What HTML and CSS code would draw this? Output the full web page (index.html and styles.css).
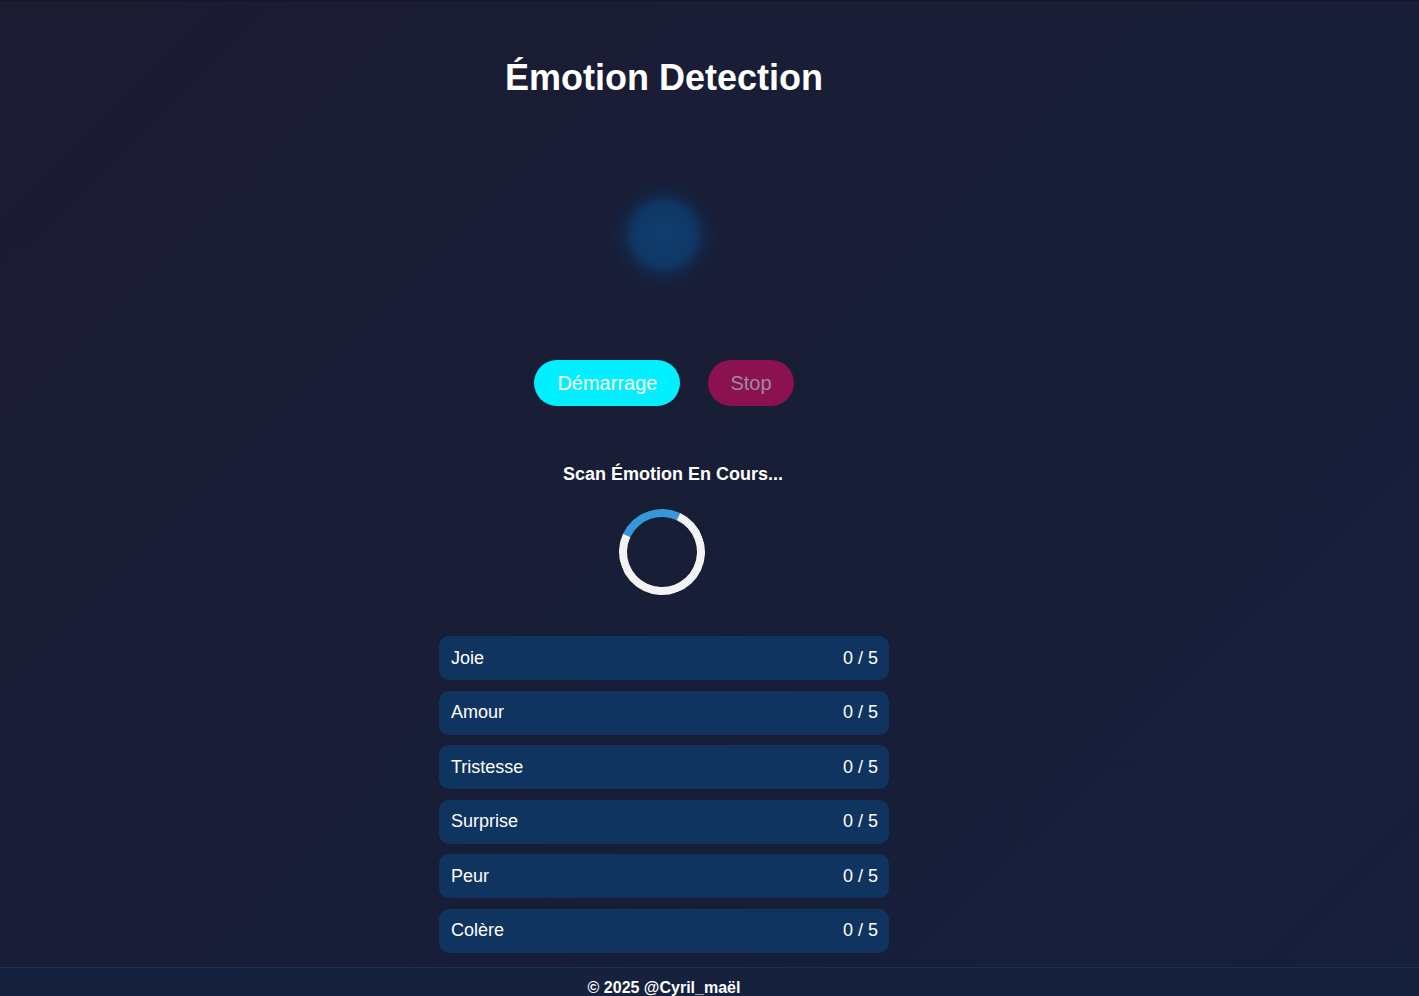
FILE: index.html
```html
<!DOCTYPE html>
<html lang="fr">
<head>
<meta charset="utf-8">
<title>Émotion Detection</title>
<link rel="stylesheet" href="styles.css">
</head>
<body>
<div class="page">
  <main class="main">
    <h1 class="title">Émotion Detection</h1>
    <div class="glow"></div>
    <div class="actions">
      <button class="btn btn-start">Démarrage</button>
      <button class="btn btn-stop" disabled>Stop</button>
    </div>
    <p class="status">Scan Émotion En Cours...</p>
    <div class="spinner"></div>
    <ul class="emotions">
      <li class="emotion"><span>Joie</span><span>0 / 5</span></li>
      <li class="emotion"><span>Amour</span><span>0 / 5</span></li>
      <li class="emotion"><span>Tristesse</span><span>0 / 5</span></li>
      <li class="emotion"><span>Surprise</span><span>0 / 5</span></li>
      <li class="emotion"><span>Peur</span><span>0 / 5</span></li>
      <li class="emotion"><span>Colère</span><span>0 / 5</span></li>
    </ul>
  </main>
  <footer class="footer">
    <p class="footer-text">© 2025 @Cyril_maël</p>
  </footer>
</div>
</body>
</html>
```
FILE: styles.css
```css
html, body {
  margin: 0;
  padding: 0;
}
body {
  background: linear-gradient(135deg, #1b1b31 0%, #181e38 60%, #161f3b 100%);
  min-height: 100vh;
  font-family: "Liberation Sans", Arial, sans-serif;
  color: #ffffff;
  border-top: 1px solid #14162a;
}
.page {
  display: flex;
  flex-direction: column;
}
.main {
  width: 1328px;
  display: flex;
  flex-direction: column;
  align-items: center;
}
.title {
  margin: 56px 0 0;
  font-size: 36px;
  line-height: 42px;
  font-weight: 700;
}
.glow {
  margin-top: 100px;
  width: 72px;
  height: 72px;
  border-radius: 50%;
  background: radial-gradient(circle, #103e70 0%, #0f3866 55%, #0f3460 100%);
  box-shadow: 0 0 20px 9px rgba(15, 52, 96, 0.6);
  filter: blur(3px);
}
.actions {
  margin-top: 89px;
  display: flex;
  gap: 28px;
}
.btn {
  height: 46px;
  padding: 0 23px;
  border: none;
  border-radius: 23px;
  font-family: "Liberation Sans", Arial, sans-serif;
  font-size: 20px;
}
.btn-start {
  background: #00f0ff;
  color: #ffffff;
}
.btn-stop {
  background: #8c1150;
  color: #9e8a9e;
  padding: 0 22px;
}
.status {
  margin: 58px 0 0;
  padding-left: 18px;
  font-size: 18px;
  line-height: 21px;
  font-weight: 700;
}
.spinner {
  margin: 24px 4px 0 0;
  width: 70px;
  height: 70px;
  border: 8px solid #f3f3f3;
  border-top-color: #3498db;
  border-radius: 50%;
  transform: rotate(-20deg);
}
.emotions {
  list-style: none;
  margin: 41px 0 0;
  padding: 0;
  width: 450px;
  display: flex;
  flex-direction: column;
  gap: 10.6px;
}
.emotion {
  height: 44px;
  padding: 0 11px 0 12px;
  border-radius: 10px;
  background: #0f3460;
  display: flex;
  justify-content: space-between;
  align-items: center;
  font-size: 18px;
}
.footer {
  margin-top: 14px;
  border-top: 1px solid #123262;
  background: #16213d;
  padding: 11px 0 11px;
}
.footer-text {
  width: 1328px;
  margin: 0;
  text-align: center;
  font-size: 16px;
  font-weight: 700;
  line-height: 18px;
}
```
